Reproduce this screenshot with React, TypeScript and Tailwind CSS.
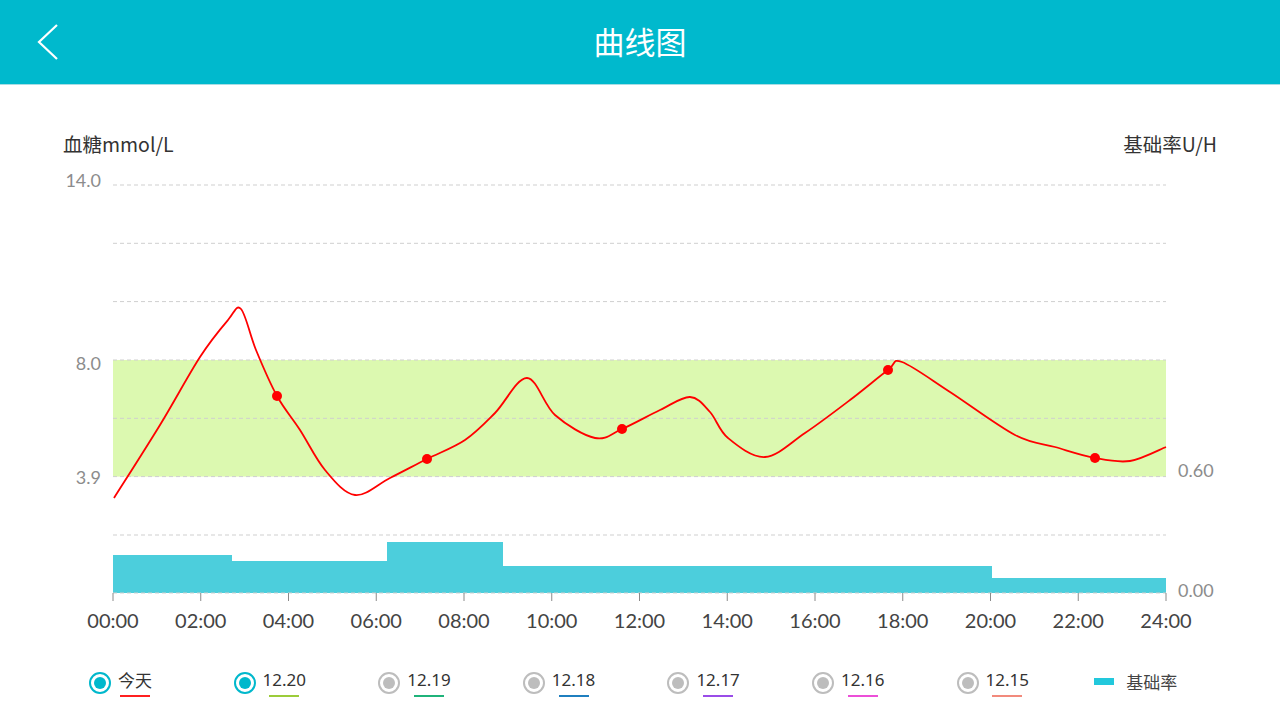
import React from 'react';

const cjk = '"Noto Sans CJK SC", "Noto Sans", sans-serif';
const num = 'Lato, "Noto Sans", sans-serif';

// chart geometry (absolute page coordinates, the svg uses a shifted viewBox)
const X0 = 113;
const X1 = 1166;
const gridYs = [185, 243.3, 301.6, 360, 418.3, 476.6, 535, 593];
const hourX = (h: number) => X0 + ((X1 - X0) * h) / 24;

const curvePoints: [number, number][] = [
  [114, 498], [160, 425], [200, 357], [228, 320], [241, 309], [256, 350],
  [277, 396], [300, 430], [325, 470], [355, 495], [390, 478], [427, 459], [465, 440],
  [495, 413], [527, 378], [555, 415], [595, 438], [622, 429], [660, 410], [690, 397],
  [710, 412], [728, 438], [765, 457], [805, 433], [850, 400], [888, 370], [902, 362],
  [950, 392], [1015, 435], [1055, 447], [1095, 458], [1130, 461], [1166, 447],
];

const dots: [number, number][] = [
  [277, 396], [427, 459], [622, 429], [888, 370], [1095, 458],
];

// basal steps: [startX, endX, topY]
const basal: [number, number, number][] = [
  [113, 232, 555],
  [232, 387, 561],
  [387, 503, 542],
  [503, 992, 566],
  [992, 1166, 578],
];

function smoothPath(pts: [number, number][]) {
  let d = `M${pts[0][0]},${pts[0][1]}`;
  for (let i = 0; i < pts.length - 1; i++) {
    const p0 = pts[i - 1] || pts[i];
    const p1 = pts[i];
    const p2 = pts[i + 1];
    const p3 = pts[i + 2] || p2;
    const c1x = p1[0] + (p2[0] - p0[0]) / 6;
    const c1y = p1[1] + (p2[1] - p0[1]) / 6;
    const c2x = p2[0] - (p3[0] - p1[0]) / 6;
    const c2y = p2[1] - (p3[1] - p1[1]) / 6;
    d += ` C${c1x},${c1y} ${c2x},${c2y} ${p2[0]},${p2[1]}`;
  }
  return d;
}

const legend = [
  { label: '今天', color: '#ff2020', active: true, cjk: true },
  { label: '12.20', color: '#9ccc3a', active: true },
  { label: '12.19', color: '#1fb37a', active: false },
  { label: '12.18', color: '#1f7fbf', active: false },
  { label: '12.17', color: '#9a4ce8', active: false },
  { label: '12.16', color: '#ec4fd8', active: false },
  { label: '12.15', color: '#f28a7c', active: false },
];

function Radio({ active }: { active: boolean }) {
  return (
    <div
      className={`w-[22px] h-[22px] rounded-full border-2 flex items-center justify-center ${
        active ? 'border-[#00b8cc]' : 'border-[#bdbdbd]'
      }`}
    >
      <div className={`w-[12px] h-[12px] rounded-full ${active ? 'bg-[#00b8cc]' : 'bg-[#bdbdbd]'}`}></div>
    </div>
  );
}

function Chart() {
  return (
    <svg width={1280} height={480} viewBox="0 160 1280 480" className="block">
      {/* target range */}
      <rect x={X0} y={360} width={X1 - X0} height={116.6} fill="#dcf9b0" />

      {/* basal rate */}
      {basal.map(([a, b, top], i) => (
        <rect key={i} x={a} y={top} width={b - a} height={593 - top} fill="#4ccedc" />
      ))}

      {/* grid */}
      {gridYs.map((y, i) => (
        <line key={i} x1={X0} x2={X1} y1={y} y2={y} stroke="#cfcfcf" strokeWidth={1} strokeDasharray="4 3" />
      ))}

      {/* ticks */}
      {Array.from({ length: 13 }).map((_, i) => (
        <line key={i} x1={hourX(i * 2)} x2={hourX(i * 2)} y1={593} y2={601} stroke="#8a8a8a" strokeWidth={1} />
      ))}

      {/* glucose curve */}
      <path d={smoothPath(curvePoints)} fill="none" stroke="#ff0000" strokeWidth={1.8} />
      {dots.map(([x, y], i) => (
        <circle key={i} cx={x} cy={y} r={5} fill="#ff0000" />
      ))}

      {/* left axis labels */}
      <g fill="#8c8c8c" fontSize={18} style={{ fontFamily: num }} textAnchor="end">
        <text x={101} y={187}>14.0</text>
        <text x={101} y={370}>8.0</text>
        <text x={101} y={484}>3.9</text>
      </g>
      {/* right axis labels */}
      <g fill="#8c8c8c" fontSize={18} style={{ fontFamily: num }}>
        <text x={1178} y={477}>0.60</text>
        <text x={1178} y={597}>0.00</text>
      </g>
      {/* hours */}
      <g fill="#444444" fontSize={20} style={{ fontFamily: num }} textAnchor="middle">
        {Array.from({ length: 13 }).map((_, i) => (
          <text key={i} x={hourX(i * 2)} y={628}>
            {String(i * 2).padStart(2, '0')}:00
          </text>
        ))}
      </g>
    </svg>
  );
}

export default function App() {
  return (
    <div className="w-[1280px] h-[720px] bg-white overflow-hidden" style={{ fontFamily: cjk }}>
      {/* header */}
      <div className="h-[84px] bg-[#00b9cd] flex items-center">
        <div className="w-[100px] pl-[36px] flex items-center">
          <svg width={24} height={38} viewBox="0 0 24 38">
            <path d="M21 2 L3 19 L21 36" fill="none" stroke="#ffffff" strokeWidth={2.2} />
          </svg>
        </div>
        <div className="flex-1 text-center text-white text-[31px] leading-[40px] pr-[100px] pb-[2px]">曲线图</div>
      </div>
      <div className="h-px bg-[#a8dde4]"></div>

      {/* axis titles */}
      <div className="flex justify-between px-[63px] pt-[46px] h-[75px] text-[19.5px] leading-[26px] text-[#333333]">
        <span>血糖mmol/L</span>
        <span>基础率U/H</span>
      </div>

      <Chart />

      {/* legend */}
      <div className="flex pl-[89px] mt-[23px] h-[40px] items-center">
        {legend.map((l) => (
          <div key={l.label} className="w-[144.6px] flex items-center gap-[7px]">
            <Radio active={l.active} />
            <div className="flex flex-col items-center">
              <span
                className="text-[17px] leading-[22px] text-[#333333]"
                style={{ fontFamily: l.cjk ? cjk : '"Noto Sans", "Open Sans", sans-serif' }}
              >
                {l.label}
              </span>
              <div className="h-[2px] w-[30px] mt-[4px]" style={{ backgroundColor: l.color }}></div>
            </div>
          </div>
        ))}
        <div className="flex items-center gap-[12px] ml-[-7px] mb-[3px]">
          <div className="w-[20px] h-[7px] bg-[#22c8dc]"></div>
          <span className="text-[17px] text-[#444444]">基础率</span>
        </div>
      </div>
    </div>
  );
}
